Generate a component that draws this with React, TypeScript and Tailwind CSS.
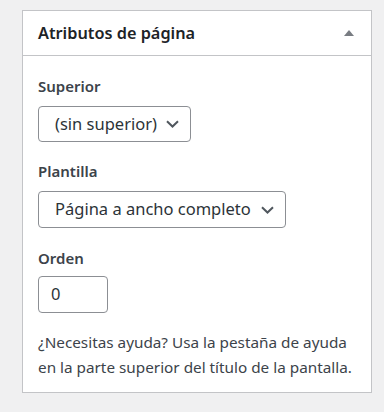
import React from "react";

const Chevron: React.FC = () => (
  <svg width="13" height="8" viewBox="0 0 13 8" className="shrink-0">
    <path d="M1 1.2L6.5 6.5L12 1.2" fill="none" stroke="#50575e" strokeWidth="2" />
  </svg>
);

const FakeSelect: React.FC<{ value: string; width: string; height: string }> = ({ value, width, height }) => (
  <div
    className={`mt-[10px] flex items-center justify-between rounded-[4px] border border-[#8c8f94] bg-white pl-[16px] pr-[11px] text-[16.5px] text-[#2c3338] ${width} ${height}`}
  >
    <span className="leading-none">{value}</span>
    <Chevron />
  </div>
);

const App: React.FC = () => {
  return (
    <div
      className="min-h-[412px] w-[384px] bg-[#f0f0f1] pt-[10px] pl-[22px]"
      style={{ fontFamily: '"Noto Sans", "Open Sans", sans-serif' }}
    >
      <div className="w-[350px] border border-[#c3c4c7] bg-white">
        <div className="flex h-[45px] items-center justify-between border-b border-[#c3c4c7] pl-[15px] pr-[17px]">
          <h2 className="text-[16.3px] font-semibold text-[#1d2327]">Atributos de página</h2>
          <svg width="10" height="6" viewBox="0 0 10 6">
            <path d="M5 0L10 6H0Z" fill="#787c82" />
          </svg>
        </div>

        <div className="px-[15px] pt-[20px] pb-[12px]">
          <p className="h-[20px] text-[15px] font-semibold leading-[20px] text-[#3c434a]">Superior</p>
          <FakeSelect value="(sin superior)" width="w-[153px]" height="h-[36px]" />

          <p className="mt-[19px] h-[20px] text-[15px] font-semibold leading-[20px] text-[#3c434a]">Plantilla</p>
          <FakeSelect value="Página a ancho completo" width="w-[248px]" height="h-[37px]" />

          <p className="mt-[20px] h-[20px] text-[15px] font-semibold leading-[20px] text-[#3c434a]">Orden</p>
          <div className="mt-[8px] flex h-[37px] w-[70px] items-center rounded-[4px] border border-[#8c8f94] pl-[12px] text-[16.5px] text-[#2c3338]">
            0
          </div>

          <p className="mt-[17px] text-[15.3px] leading-[25px] text-[#3c434a]">
            ¿Necesitas ayuda? Usa la pestaña de ayuda en la parte superior del título de la pantalla.
          </p>
        </div>
      </div>
    </div>
  );
};

export default App;
